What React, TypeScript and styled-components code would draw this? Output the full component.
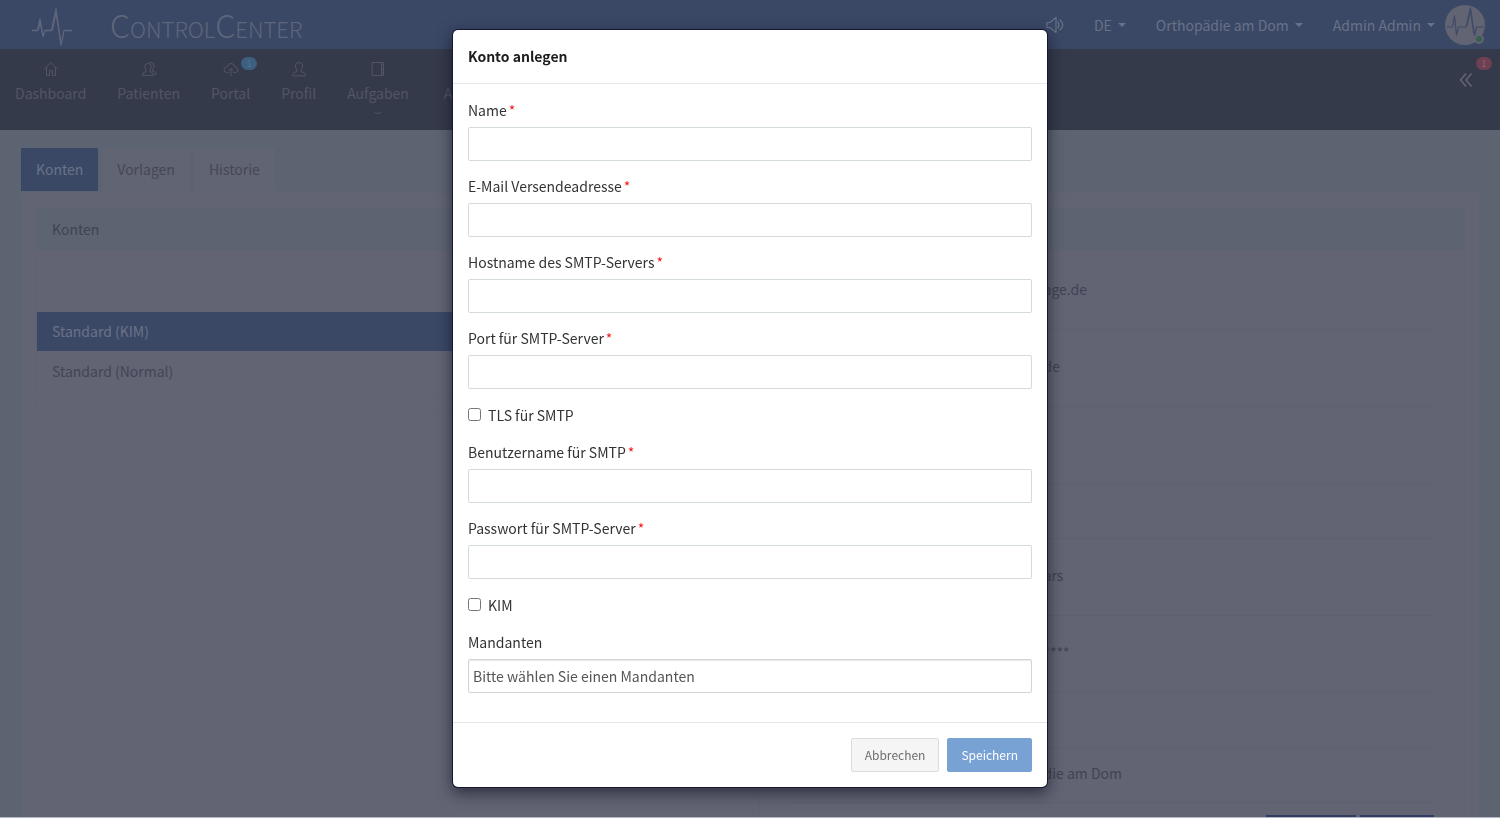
import React from "react";
import styled, { createGlobalStyle } from "styled-components";

const GlobalStyle = createGlobalStyle`
  *, *::before, *::after { box-sizing: border-box; }
  body {
    margin: 0;
    background: #b4b6c6;
    font-family: "Noto Sans CJK SC", "Noto Sans", sans-serif;
    font-size: 14px;
    line-height: 24px;
  }
  button, input, select { font: inherit; }
`;

const Shell = styled.div`
  height: calc(100vh - 1px);
  overflow: hidden;
  display: flex;
  flex-direction: column;
  background: #5d6471;
`;

const TopBar = styled.header`
  flex: none;
  height: 49px;
  display: flex;
  align-items: center;
  padding: 0 15px 0 30px;
  background: #3a4866;
  color: #697187;
`;

const Brand = styled.a`
  display: flex;
  align-items: center;
  gap: 36px;
  margin-right: auto;
  color: #5f667c;
  text-decoration: none;
`;

const BrandName = styled.span`
  padding-bottom: 2px;
  font-weight: 300;
  font-size: 32px;
  line-height: 46px;
  font-variant: small-caps;
`;

const TopMenu = styled.nav`
  display: flex;
  align-items: center;
  gap: 30px;
`;

const PlainButton = styled.button`
  display: flex;
  align-items: center;
  gap: 6px;
  padding: 0;
  border: 0;
  background: none;
  color: inherit;
`;

const Caret = styled.span`
  border: 4px solid transparent;
  border-top-color: currentColor;
  border-bottom: 0;
`;

const Avatar = styled.span`
  position: relative;
  display: flex;
  width: 40px;
  height: 40px;
  margin-left: 10px;
  border-radius: 50%;
  background: #626473;
  color: #3f4a66;
`;

const Presence = styled.span`
  position: absolute;
  right: 1px;
  bottom: 1px;
  width: 10px;
  height: 10px;
  border: 2px solid #626473;
  border-radius: 50%;
  background: #37604f;
`;

const NavBar = styled.nav`
  flex: none;
  height: 81px;
  display: flex;
  align-items: flex-start;
  padding: 12px 27px 0 15px;
  gap: 31px;
  background: #353a4a;
  color: #515566;
`;

const NavItem = styled.a`
  position: relative;
  display: flex;
  flex-direction: column;
  align-items: center;
  gap: 4px;
  color: inherit;
  text-decoration: none;
`;

const Badge = styled.span<{ $tone: string; $ink: string }>`
  position: absolute;
  top: -4px;
  right: -7px;
  width: 16px;
  height: 13px;
  border-radius: 7px;
  background: ${(p) => p.$tone};
  color: ${(p) => p.$ink};
  font-size: 9px;
  line-height: 13px;
  text-align: center;
`;

const Collapse = styled.button`
  position: relative;
  margin-left: auto;
  width: 14px;
  height: 38px;
  display: flex;
  align-items: center;
  padding: 0;
  border: 0;
  background: none;
  color: #626678;
`;

const CollapseBadge = styled(Badge)`
  right: -19px;
`;

const Main = styled.main`
  flex: 1;
  min-height: 0;
  padding: 18px 21px 0;
`;

const Tabs = styled.div`
  display: flex;
  gap: 4px;
`;

const Tab = styled.button<{ $active?: boolean }>`
  height: 43px;
  padding: 0 15px 1px;
  border: 0;
  background: ${(p) => (p.$active ? "#3a4866" : "#616472")};
  color: ${(p) => (p.$active ? "#6b7286" : "#444757")};
`;

const Content = styled.div`
  display: flex;
  align-items: flex-start;
  gap: 16px;
  height: 900px;
  margin-top: 1px;
  padding: 15px 14px 0 15px;
  border-top: 1px solid #5f6270;
  background: #626473;
`;

const Panel = styled.section`
  flex: 1;
  border: 1px solid #5f6271;
`;

const PanelHead = styled.h2`
  height: 41px;
  margin: 0;
  padding: 0 15px;
  background: #5d6471;
  color: #404353;
  font-size: 14px;
  font-weight: 400;
  line-height: 40px;
`;

const AccountList = styled.ul`
  margin: 0;
  padding: 62px 0 20px;
  list-style: none;
`;

const Account = styled.li<{ $active?: boolean }>`
  height: ${(p) => (p.$active ? 39 : 43)}px;
  padding: 0 15px;
  border-bottom: ${(p) => (p.$active ? 0 : 1)}px solid #5f6270;
  background: ${(p) => (p.$active ? "#3a4866" : "none")};
  color: ${(p) => (p.$active ? "#6b7286" : "#424555")};
  line-height: ${(p) => (p.$active ? 38 : 41)}px;
`;

const Details = styled.div`
  padding: 3px 30px 15px;
  color: #404354;
`;

const Detail = styled.div<{ $tall?: boolean }>`
  display: flex;
  align-items: center;
  height: ${(p) => (p.$tall ? 77 : 55)}px;
  padding: 0 0 4px 254px;
  border-bottom: 1px solid #5d606f;
`;

const DetailActions = styled.div`
  display: flex;
  justify-content: flex-end;
  gap: 4px;
  padding-top: 12px;
`;

const DarkButton = styled.button<{ $wide?: boolean }>`
  width: ${(p) => (p.$wide ? 90 : 74)}px;
  height: 34px;
  border: 0;
  background: #2f3e60;
`;

const Overlay = styled.div`
  position: fixed;
  inset: 0;
  display: flex;
  align-items: flex-start;
  justify-content: center;
  padding-top: 30px;
`;

const Dialog = styled.form`
  width: 594px;
  max-width: 100%;
  border-radius: 5px;
  background: #fff;
  color: #333;
  box-shadow: 0 0 0 1px #15182e, 0 5px 15px 1px rgba(10, 12, 30, 0.6);
`;

const DialogHead = styled.h1`
  margin: 0;
  padding: 15px 15px 16px;
  border-bottom: 1px solid #e5e8e9;
  color: #1d1d1f;
  font-size: 14px;
  font-weight: 700;
  line-height: 22px;
`;

const DialogBody = styled.div`
  display: flex;
  flex-direction: column;
  gap: 13px;
  padding: 14px 15px 29px;
`;

const Field = styled.div`
  display: flex;
  flex-direction: column;
  gap: 5px;
`;

const Required = styled.span`
  margin-left: 2px;
  color: #f01818;
`;

const TextInput = styled.input`
  width: 100%;
  height: 34px;
  padding: 0 10px;
  border: 1px solid #d3dbdd;
  border-radius: 2px;
  background: #fff;
`;

const Select = styled.select`
  appearance: none;
  width: 100%;
  height: 34px;
  padding: 0 4px 1px;
  border: 1px solid #cfd6d8;
  border-radius: 2px;
  background: #fff;
  box-shadow: inset 0 1px 1px rgba(0, 0, 0, 0.08);
  color: #555;
`;

const CheckRow = styled.label`
  display: flex;
  align-items: center;
  gap: 7px;
  height: 25px;
`;

const CheckBox = styled.input`
  width: 13px;
  height: 13px;
  margin: 0;
`;

const DialogFoot = styled.footer`
  display: flex;
  justify-content: flex-end;
  gap: 8px;
  padding: 15px;
  border-top: 1px solid #e5e5e5;
`;

const Button = styled.button<{ $primary?: boolean }>`
  height: 34px;
  padding: 0 13px;
  border: 1px solid ${(p) => (p.$primary ? "#78a1d4" : "#dcdcdc")};
  border-radius: 2px;
  background: ${(p) => (p.$primary ? "#78a1d4" : "#f5f5f5")};
  color: ${(p) => (p.$primary ? "#fff" : "#6e6e6e")};
  font-size: 12px;
`;

const Icon = ({ children, size = 16 }: { children?: React.ReactNode; size?: number }) => (
  <svg width={size} height={size} viewBox="0 0 16 16" fill="none" stroke="currentColor" strokeWidth="1" strokeLinejoin="round" strokeLinecap="round" aria-hidden="true">
    {children}
  </svg>
);

const SubmenuMark = styled.svg`
  margin-top: 2px;
`;

const Pulse = () => (
  <svg width="44" height="42" viewBox="0 0 44 42" fill="none" stroke="currentColor" strokeLinejoin="round" aria-hidden="true">
    <path d="M2 26.500H7.500L10 15L13 32.500L15 26.500H21.500L26 5L31 41L34 26.500H42" strokeWidth="1.300" />
    <path d="M22.500 26L26 9L30.500 36M8.500 26L10 19L12.500 29" strokeWidth="1" />
  </svg>
);

const AvatarPulse = () => (
  <svg width="40" height="40" viewBox="0 0 40 40" fill="none" stroke="currentColor" strokeLinejoin="round" aria-hidden="true">
    <path d="M2 22H7.500L9.500 11L11.500 30L13.500 22H21L25.500 3L29.500 30.500L31.500 22H39" strokeWidth="1.200" />
    <path d="M22 21.500L25.500 7L28.500 28" strokeWidth="0.800" />
  </svg>
);

const TextField = ({ id, label, type = "text" }: { id: string; label: string; type?: string }) => (
  <Field>
    <label htmlFor={id}>
      {label}
      <Required>*</Required>
    </label>
    <TextInput id={id} type={type} />
  </Field>
);

export default function App() {
  return (
    <>
      <GlobalStyle />
      <Shell>
        <TopBar>
          <Brand href="#">
            <Pulse />
            <BrandName>ControlCenter</BrandName>
          </Brand>
          <TopMenu>
            <PlainButton aria-label="Ton">
              <svg width="18" height="18" viewBox="0 0 18 18" fill="none" stroke="currentColor" strokeWidth="1.200" strokeLinejoin="round" strokeLinecap="round">
                <path d="M1 6.500H4L10 1.500V16.500L4 11.500H1ZM12 6Q14 9 12 12M14 4Q19.500 9 14 14" />
              </svg>
            </PlainButton>
            <PlainButton>DE<Caret /></PlainButton>
            <PlainButton>Orthopädie am Dom<Caret /></PlainButton>
            <PlainButton>Admin Admin<Caret /></PlainButton>
          </TopMenu>
          <Avatar>
            <AvatarPulse />
            <Presence />
          </Avatar>
        </TopBar>
        <NavBar>
          <NavItem href="#">
            <Icon><path d="M1.500 8L8 1.500L14.500 8M3.500 6.500V14.500H6.500V9.500H9.500V14.500H12.500V6.500" /></Icon>
            Dashboard
          </NavItem>
          <NavItem href="#">
            <Icon>
              <path d="M1 14Q1 11.500 5 10.500V9Q3.500 7 4 4.500Q4.500 2.500 7 2.500T10 4.500Q10.500 7 9 9V10.500Q12.500 11.500 12.500 14Z" />
              <path d="M8 2Q9 1 10.500 1.500Q13 2 13 5Q13 7 11.500 8.500V10Q15 11 15 13.500H14" />
            </Icon>
            Patienten
          </NavItem>
          <NavItem href="#">
            <Icon>
              <path d="M5.500 11.500H3.500Q1 11 1 8.500T4 6Q4.500 2.500 8 2.500T12 6Q15 6.500 15 9T12.500 11.500H10.500M8 14.500V7.500M6 9.500L8 7.500L10 9.500" />
            </Icon>
            Portal
            <Badge $tone="#3d5f80" $ink="#557390">1</Badge>
          </NavItem>
          <NavItem href="#">
            <Icon>
              <path d="M1.500 14.500Q1.500 11.500 6 10.500V9Q4 7 4.500 4Q5 1.500 8 1.500T11.500 4Q12 7 10 9V10.500Q14.500 11.500 14.500 14.500Z" />
            </Icon>
            Profil
          </NavItem>
          <NavItem href="#">
            <Icon><path d="M2.500 1.500H13.500V14.500H2.500ZM11.500 1.500V14.500M13.500 4H11.500M13.500 8H11.500M13.500 12H11.500" /></Icon>
            Aufgaben
            <SubmenuMark width="8" height="4" viewBox="0 0 8 4" fill="none" stroke="currentColor"><path d="M1 1L4 3L7 1" /></SubmenuMark>
          </NavItem>
          <NavItem href="#">
            <Icon />
            A
          </NavItem>
          <Collapse aria-label="Leiste einklappen">
            <svg width="14" height="16" viewBox="0 0 14 16" fill="none" stroke="currentColor" strokeWidth="1.500"><path d="M7 1.500L1.500 8L7 14.500M12.500 1.500L7 8L12.500 14.500" /></svg>
            <CollapseBadge $tone="#6f3f53" $ink="#8a6478">1</CollapseBadge>
          </Collapse>
        </NavBar>
        <Main>
          <Tabs>
            <Tab $active>Konten</Tab>
            <Tab>Vorlagen</Tab>
            <Tab>Historie</Tab>
          </Tabs>
          <Content>
            <Panel>
              <PanelHead>Konten</PanelHead>
              <AccountList>
                <Account $active>Standard (KIM)</Account>
                <Account>Standard (Normal)</Account>
              </AccountList>
            </Panel>
            <Panel>
              <PanelHead />
              <Details>
                <Detail $tall>age.de</Detail>
                <Detail $tall>de</Detail>
                <Detail $tall />
                <Detail />
                <Detail $tall>ars</Detail>
                <Detail $tall>****</Detail>
                <Detail />
                <Detail>die am Dom</Detail>
                <DetailActions>
                  <DarkButton $wide aria-label="Bearbeiten" />
                  <DarkButton aria-label="Löschen" />
                </DetailActions>
              </Details>
            </Panel>
          </Content>
        </Main>
      </Shell>
      <Overlay>
        <Dialog role="dialog" aria-labelledby="dialog-title" onSubmit={(e) => e.preventDefault()}>
          <DialogHead id="dialog-title">Konto anlegen</DialogHead>
          <DialogBody>
            <TextField id="name" label="Name" />
            <TextField id="mail" label="E-Mail Versendeadresse" />
            <TextField id="host" label="Hostname des SMTP-Servers" />
            <TextField id="port" label="Port für SMTP-Server" />
            <CheckRow><CheckBox type="checkbox" />TLS für SMTP</CheckRow>
            <TextField id="user" label="Benutzername für SMTP" />
            <TextField id="password" label="Passwort für SMTP-Server" type="password" />
            <CheckRow><CheckBox type="checkbox" />KIM</CheckRow>
            <Field>
              <label htmlFor="clients">Mandanten</label>
              <Select id="clients"><option>Bitte wählen Sie einen Mandanten</option></Select>
            </Field>
          </DialogBody>
          <DialogFoot>
            <Button type="button">Abbrechen</Button>
            <Button type="submit" $primary>Speichern</Button>
          </DialogFoot>
        </Dialog>
      </Overlay>
    </>
  );
}
